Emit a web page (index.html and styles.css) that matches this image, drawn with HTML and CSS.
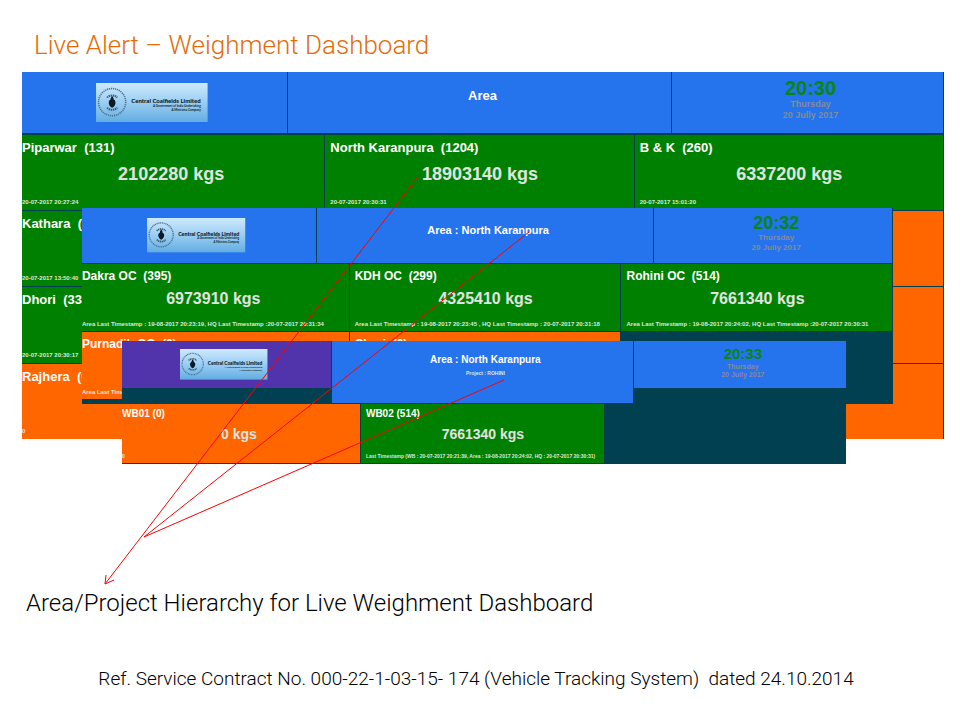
FILE: index.html
```html
<!DOCTYPE html>
<html lang="en">
<head>
<meta charset="utf-8">
<meta name="viewport" content="width=device-width, initial-scale=1">
<title>Live Alert – Weighment Dashboard</title>
<link rel="stylesheet" href="styles.css">
</head>
<body>
<svg class="defs" aria-hidden="true">
  <defs>
    <linearGradient id="sky" x1="0" y1="0" x2="0" y2="1">
      <stop offset="0" stop-color="#cdeafd"/>
      <stop offset="0.5" stop-color="#9acdf1"/>
      <stop offset="1" stop-color="#62ade2"/>
    </linearGradient>
    <symbol id="logo" viewBox="0 0 111 39">
      <rect width="111" height="39" fill="url(#sky)"/>
      <circle cx="16" cy="19" r="13.5" fill="none" stroke="#4f7590" stroke-width="1.6" stroke-dasharray="1.2 0.8"/>
      <path d="M11 14.5a7 7 0 0 1 10 0M11 24.500a7 7 0 0 0 10 0" fill="none" stroke="#3d5f78" stroke-width="2" stroke-dasharray="1.400 0.600"/>
      <path d="M16 13c1 1.500 1.500 2 1.500 3.500c1.500 0.500 2 2 1.800 3.500c-0.300 2-1.300 3.500-3.300 4.500c-2-1-3-2.500-3.300-4.500c-0.200-1.500 0.300-3 1.800-3.500c0-1.500 0.500-2 1.500-3.500z" fill="#0d1a26"/>
      <text class="logo-name" x="104" y="20">Central Coalfields Limited</text>
      <text class="logo-sub" x="104" y="24">A Government  of India Undertaking</text>
      <text class="logo-sub" x="104" y="28">A Miniratna Company</text>
    </symbol>
  </defs>
</svg>

<main class="slide">
  <h1>Live Alert – Weighment Dashboard</h1>

  <figure>
    <div class="stage">
      <section class="panel panel-area" aria-label="Area">
        <header>
          <div class="brand"><svg class="logo" viewBox="0 0 111 39" role="img" aria-label="Central Coalfields Limited"><use href="#logo"/></svg></div>
          <div class="heading"><h2>Area</h2></div>
          <div class="clock"><time>20:30</time><p>Thursday<br>20 Jully 2017</p></div>
        </header>
        <div class="tiles">
          <article class="ok"><h3>Piparwar  (131)</h3><p class="kgs">2102280 kgs</p><p class="stamp">20-07-2017 20:27:24</p></article>
          <article class="ok"><h3>North Karanpura  (1204)</h3><p class="kgs">18903140 kgs</p><p class="stamp">20-07-2017 20:30:31</p></article>
          <article class="ok"><h3>B &amp; K  (260)</h3><p class="kgs">6337200 kgs</p><p class="stamp">20-07-2017 15:01:20</p></article>
          <article class="ok"><h3>Kathara  (3</h3><p class="stamp">20-07-2017 13:50:40</p></article>
          <article class="ok"></article>
          <article class="alert"></article>
          <article class="ok"><h3>Dhori  (338</h3><p class="stamp">20-07-2017 20:30:17</p></article>
          <article class="ok"></article>
          <article class="alert"></article>
          <article class="alert"><h3>Rajhera  (0</h3><p class="stamp">0</p></article>
          <article class="alert"></article>
          <article class="alert"></article>
        </div>
      </section>

      <section class="panel panel-project" aria-label="Area : North Karanpura">
        <header>
          <div class="brand"><svg class="logo" viewBox="0 0 111 39" role="img" aria-label="Central Coalfields Limited"><use href="#logo"/></svg></div>
          <div class="heading"><h2>Area : North Karanpura</h2></div>
          <div class="clock"><time>20:32</time><p>Thursday<br>20 Jully 2017</p></div>
        </header>
        <div class="tiles">
          <article class="ok"><h3>Dakra OC  (395)</h3><p class="kgs">6973910 kgs</p><p class="stamp">Area Last Timestamp : 19-08-2017 20:23:19, HQ Last Timestamp :20-07-2017 20:31:34</p></article>
          <article class="ok"><h3>KDH OC  (299)</h3><p class="kgs">4325410 kgs</p><p class="stamp">Area Last Timestamp : 19-08-2017 20:23:45 , HQ Last Timestamp : 20-07-2017 20:31:18</p></article>
          <article class="ok"><h3>Rohini OC  (514)</h3><p class="kgs">7661340 kgs</p><p class="stamp">Area Last Timestamp : 19-08-2017 20:24:02, HQ Last Timestamp :20-07-2017 20:30:31</p></article>
          <article class="alert"><h3>Purnadih OC  (0)</h3><p class="stamp">Area Last Time</p></article>
          <article class="alert"><h3>Churi  (0)</h3></article>
        </div>
      </section>

      <section class="panel panel-bridge" aria-label="Project : ROHINI">
        <header>
          <div class="brand"><svg class="logo" viewBox="0 0 111 39" role="img" aria-label="Central Coalfields Limited"><use href="#logo"/></svg></div>
          <div class="heading"><h2>Area : North Karanpura</h2><p>Project : ROHINI</p></div>
          <div class="clock"><time>20:33</time><p>Thursday<br>20 Jully 2017</p></div>
        </header>
        <div class="tiles">
          <article class="alert"><h3>WB01 (0)</h3><p class="kgs">0 kgs</p><p class="stamp">0</p></article>
          <article class="ok"><h3>WB02 (514)</h3><p class="kgs">7661340 kgs</p><p class="stamp">Last Timestamp (WB : 20-07-2017 20:21:39, Area : 19-08-2017 20:24:02, HQ : 20-07-2017 20:30:31)</p></article>
        </div>
      </section>
    </div>

    <svg class="arrows" viewBox="0 0 922 520" preserveAspectRatio="none" aria-hidden="true">
      <path d="M395 106L83 512M84 503L83 512L92 508M507 160L122 465M482 308L122 465"/>
    </svg>

    <figcaption>Area/Project Hierarchy for Live Weighment Dashboard</figcaption>
  </figure>

  <footer>Ref. Service Contract No. 000-22-1-03-15- 174 (Vehicle Tracking System)  dated 24.10.2014</footer>
</main>
</body>
</html>
```
FILE: styles.css
```css
* {
  box-sizing: border-box;
}

body,
h1,
h2,
h3,
p,
figure {
  margin: 0;
}

body {
  background: #fff;
  color: #000;
  font-family: "Liberation Sans", Arial, sans-serif;
}

.defs {
  position: absolute;
  width: 0;
  height: 0;
}

.slide {
  padding: 29px 16px 0 22px;
}

h1,
figcaption,
footer {
  font-family: Roboto, "Liberation Sans", sans-serif;
  font-weight: 300;
}

h1 {
  padding-left: 12px;
  color: #e46c0a;
  font-size: 26px;
  line-height: 32px;
}

figure {
  position: relative;
  margin-top: 11px;
}

.stage {
  position: relative;
}

.panel {
  background: #004050;
  font-weight: bold;
}

.panel h2,
.panel h3 {
  color: #fff;
  white-space: pre;
}

.panel header,
.tiles {
  display: grid;
  column-gap: 1px;
}

.brand,
.heading,
.clock {
  background: #2673ee;
  text-align: center;
}

.brand {
  display: flex;
  align-items: center;
  justify-content: center;
  padding-right: 5px;
}

.heading,
.clock {
  padding-left: 6px;
}

.logo {
  width: 43%;
}

.logo-name {
  font: 900 6px Lato, sans-serif;
  text-anchor: end;
  fill: #0d1a26;
}

.logo-sub {
  font: 700 3px Lato, sans-serif;
  text-anchor: end;
  fill: #0d1a26;
}

.clock time {
  display: block;
  color: #088516;
}

.clock p {
  color: #848b98;
}

article {
  display: flex;
  flex-direction: column;
  overflow: hidden;
  white-space: pre;
}

article + article {
  padding-left: 5px;
}

.ok {
  background: #008000;
}

.alert {
  background: #ff6600;
}

.kgs {
  padding-right: 4px;
  color: #e0e4e0;
  text-align: center;
}

.stamp {
  margin-top: auto;
  color: #dde8dd;
}

/* Area overview */
.panel-area {
  padding-right: 1px;
}

.panel-area header {
  grid-template-columns: 265fr 383fr 271fr;
  height: 61px;
}

.panel-area .tiles {
  grid-template-columns: 302fr 308fr 308fr;
  grid-template-rows: 75px 75px 76px 75px;
  row-gap: 1px;
  margin-top: 2px;
}

.panel-area article:nth-child(3n + 1) {
  padding-left: 0;
}

.panel-area h2 {
  margin-top: 16px;
  font-size: 13px;
  line-height: 16px;
}

.panel-area time {
  margin-top: 5px;
  font-size: 20px;
  line-height: 22px;
}

.panel-area .clock p {
  font-size: 9px;
  line-height: 11px;
}

.panel-area h3 {
  margin-top: 5px;
  font-size: 13px;
  line-height: 16px;
}

.panel-area .kgs {
  margin-top: 8px;
  font-size: 18px;
  line-height: 20px;
}

.panel-area .stamp {
  font-size: 6px;
  line-height: 16px;
}

/* Project level */
.panel-project {
  position: absolute;
  top: 136px;
  left: 6.5%;
  width: 88%;
  padding: 0 1px 5px 0;
}

.panel-project header {
  grid-template-columns: 234fr 336fr 238fr;
  height: 55px;
}

.panel-project .tiles {
  grid-template-columns: 267fr 271fr 271fr;
  grid-auto-rows: 67px;
  row-gap: 1px;
  margin-top: 1px;
}

.panel-project article:nth-child(3n + 1) {
  padding-left: 0;
}

.panel-project h2 {
  margin-top: 14px;
  font-size: 11px;
  line-height: 16px;
}

.panel-project time {
  margin-top: 5px;
  font-size: 18px;
  line-height: 20px;
}

.panel-project .clock p {
  font-size: 8px;
  line-height: 10px;
}

.panel-project h3 {
  margin-top: 4px;
  font-size: 12px;
  line-height: 16px;
}

.panel-project .kgs {
  margin-top: 6px;
  font-size: 16px;
  line-height: 18px;
}

.panel-project .stamp {
  font-size: 6px;
  line-height: 14px;
}

/* Weighbridge level */
.panel-bridge {
  position: absolute;
  top: 269px;
  left: 10.85%;
  width: 78.5%;
  padding-bottom: 1px;
}

.panel-bridge header {
  grid-template-columns: 209fr 301fr 212fr;
  align-items: start;
}

.panel-bridge .brand,
.panel-bridge .clock {
  height: 47px;
}

.panel-bridge .brand {
  background: #5133ab;
}

.panel-bridge .heading {
  height: 62px;
}

.panel-bridge .tiles {
  grid-template-columns: 238fr 243fr 241fr;
  grid-auto-rows: 59px;
  margin-top: 1px;
}

.panel-bridge h2 {
  margin-top: 12px;
  font-size: 10px;
  line-height: 14px;
}

.panel-bridge .heading p {
  color: #dde8dd;
  font-size: 5px;
  line-height: 12px;
}

.panel-bridge time {
  margin-top: 4px;
  font-size: 15px;
  line-height: 18px;
}

.panel-bridge .clock p {
  font-size: 7px;
  line-height: 8px;
}

.panel-bridge h3 {
  margin-top: 3px;
  font-size: 10px;
  line-height: 14px;
}

.panel-bridge .kgs {
  margin-top: 5px;
  font-size: 14px;
  line-height: 16px;
}

.panel-bridge .stamp {
  font-size: 5px;
  line-height: 14px;
}

.arrows {
  position: absolute;
  top: 0;
  left: 0;
  width: 100%;
  height: 520px;
}

.arrows path {
  fill: none;
  stroke: #f00;
  stroke-width: 1;
  vector-effect: non-scaling-stroke;
}

figcaption {
  margin-top: 148px;
  padding-left: 4px;
  font-size: 24px;
  line-height: 32px;
}

footer {
  margin-top: 48px;
  padding-right: 14px;
  font-size: 19px;
  line-height: 24px;
  text-align: center;
  white-space: pre-wrap;
}
```
